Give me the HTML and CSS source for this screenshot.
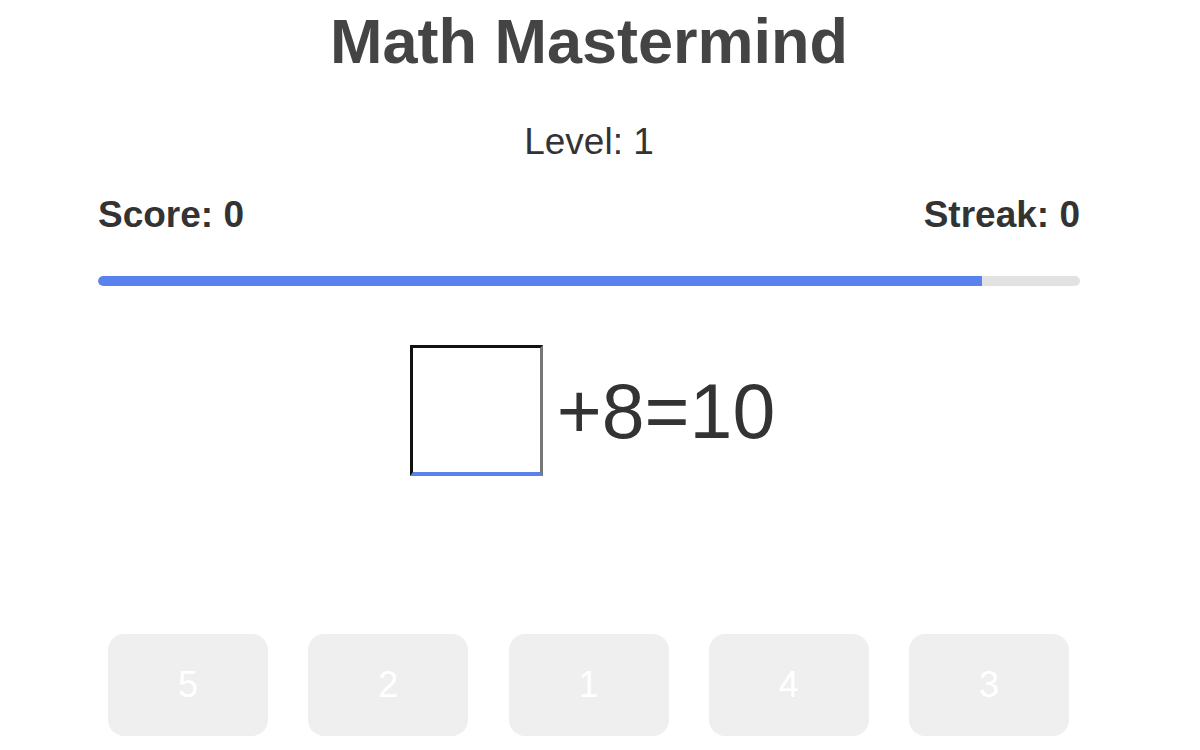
FILE: index.html
```html
<!DOCTYPE html>
<html lang="en">
<head>
<meta charset="utf-8">
<title>Math Mastermind</title>
<link rel="stylesheet" href="styles.css">
</head>
<body>
<div class="game">
  <h1 class="title">Math Mastermind</h1>
  <div class="level">Level: 1</div>
  <div class="stats">
    <span class="stat">Score: 0</span>
    <span class="stat">Streak: 0</span>
  </div>
  <div class="progress"><div class="progress-fill" style="width: 90%"></div></div>
  <div class="equation">
    <div class="answer-box"></div>
    <span class="expr">+8=10</span>
  </div>
  <div class="options">
    <button class="option">5</button>
    <button class="option">2</button>
    <button class="option">1</button>
    <button class="option">4</button>
    <button class="option">3</button>
  </div>
</div>
</body>
</html>
```

FILE: styles.css
```css
html, body {
  margin: 0;
  padding: 0;
  background: #ffffff;
}
body {
  font-family: "Liberation Sans", Arial, sans-serif;
  color: #333;
}
.game {
  width: 982px;
  margin-left: 98px;
  display: flex;
  flex-direction: column;
}
.title {
  margin: 5px 0 0;
  font-size: 63px;
  line-height: 72px;
  font-weight: bold;
  color: #444;
  text-align: center;
}
.level {
  margin-top: 43px;
  font-size: 37px;
  line-height: 43px;
  text-align: center;
  color: #333;
}
.stats {
  margin-top: 30px;
  display: flex;
  justify-content: space-between;
  font-size: 37px;
  line-height: 43px;
  font-weight: bold;
  color: #333;
}
.progress {
  margin-top: 40px;
  height: 10px;
  border-radius: 5px;
  background: #e2e2e2;
  overflow: hidden;
}
.progress-fill {
  height: 100%;
  background: #5a82ef;
  border-radius: 5px 0 0 5px;
}
.equation {
  margin-top: 59px;
  display: flex;
  justify-content: center;
  align-items: center;
  gap: 14px;
  padding-left: 7px;
}
.answer-box {
  box-sizing: border-box;
  width: 133px;
  height: 131px;
  border-top: 3px solid #111;
  border-left: 3px solid #111;
  border-right: 3px solid #767676;
  border-bottom: 4px solid #5a82ef;
  background: #fff;
}
.expr {
  font-size: 77px;
  line-height: 90px;
  color: #333;
}
.options {
  margin-top: 158px;
  padding: 0 10px;
  display: flex;
  gap: 40.25px;
}
.option {
  width: 160px;
  height: 102px;
  border: none;
  border-radius: 16px;
  background: #efefef;
  color: #ffffff;
  font-family: "Liberation Sans", Arial, sans-serif;
  font-size: 36px;
  padding: 0;
}
```
